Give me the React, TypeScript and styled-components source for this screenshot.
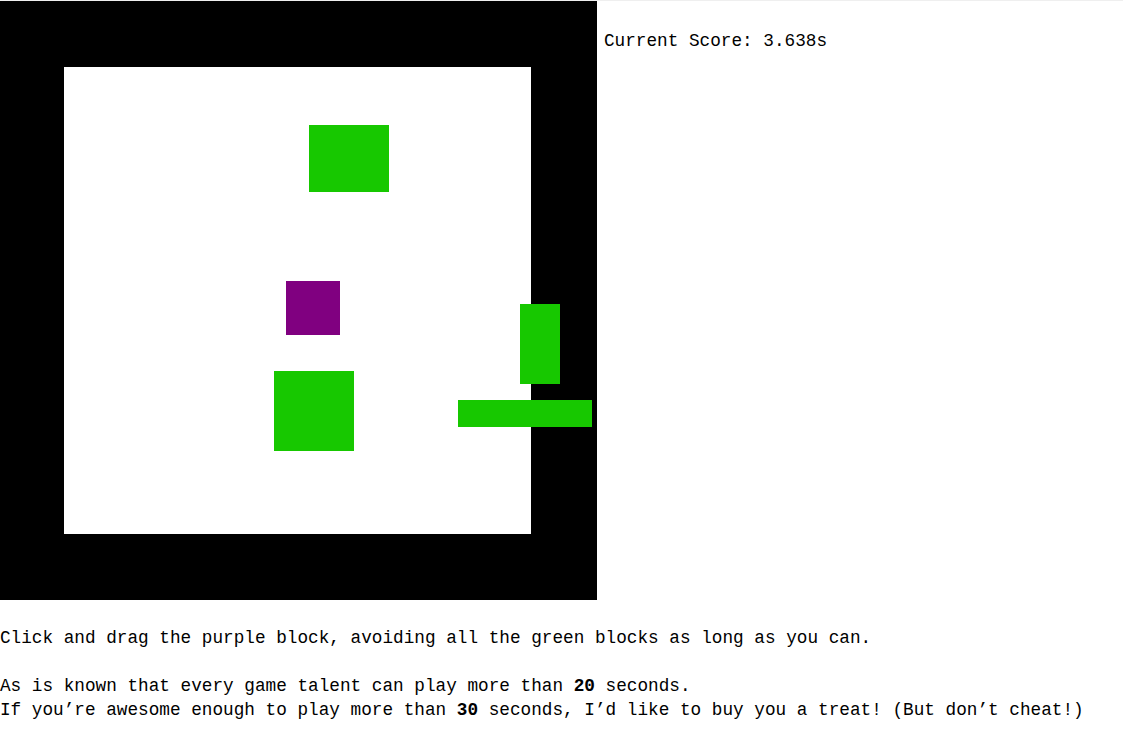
import React from "react";
import styled, { createGlobalStyle } from "styled-components";

const GlobalStyle = createGlobalStyle`
  html, body {
    margin: 0;
    padding: 0;
    background: #ffffff;
  }
  body {
    font-family: "Liberation Mono", "DejaVu Sans Mono", monospace;
    font-size: 17.72px;
    color: #000000;
  }
`;

const Page = styled.div`
  border-top: 1px solid #efefef;
  width: 1123px;
`;

const TopRow = styled.div`
  display: flex;
  align-items: flex-start;
`;

const Board = styled.div`
  position: relative;
  width: 597px;
  height: 599px;
  background: #000000;
  flex-shrink: 0;
`;

const Arena = styled.div`
  position: absolute;
  left: 64px;
  top: 66px;
  width: 467px;
  height: 467px;
  background: #ffffff;
`;

const Block = styled.div<{ $color: string }>`
  position: absolute;
  background: ${(p) => p.$color};
`;

const Score = styled.div`
  margin-top: 28px;
  padding-left: 7px;
  line-height: 24px;
  white-space: pre;
`;

const Info = styled.div`
  margin-top: 26px;
  line-height: 24px;
  white-space: pre;
`;

const Line = styled.div<{ $gapBefore?: boolean }>`
  margin-top: ${(p) => (p.$gapBefore ? "24px" : "0")};
`;

const Strong = styled.b`
  font-weight: bold;
`;

const GREEN = "#17c800";
const PURPLE = "#800080";

const blocks = [
  { left: 309, top: 124, width: 80, height: 67, color: GREEN },
  { left: 286, top: 280, width: 54, height: 54, color: PURPLE },
  { left: 520, top: 303, width: 40, height: 80, color: GREEN },
  { left: 274, top: 370, width: 80, height: 80, color: GREEN },
  { left: 458, top: 399, width: 134, height: 27, color: GREEN },
];

export default function App() {
  return (
    <>
      <GlobalStyle />
      <Page>
        <TopRow>
          <Board>
            <Arena />
            {blocks.map((b, i) => (
              <Block
                key={i}
                $color={b.color}
                style={{ left: b.left, top: b.top, width: b.width, height: b.height }}
              />
            ))}
          </Board>
          <Score>Current Score: 3.638s</Score>
        </TopRow>
        <Info>
          <Line>Click and drag the purple block, avoiding all the green blocks as long as you can.</Line>
          <Line $gapBefore>
            As is known that every game talent can play more than <Strong>20</Strong> seconds.
          </Line>
          <Line>
            If you’re awesome enough to play more than <Strong>30</Strong> seconds, I’d like to buy you a treat! (But don’t cheat!)
          </Line>
        </Info>
      </Page>
    </>
  );
}
